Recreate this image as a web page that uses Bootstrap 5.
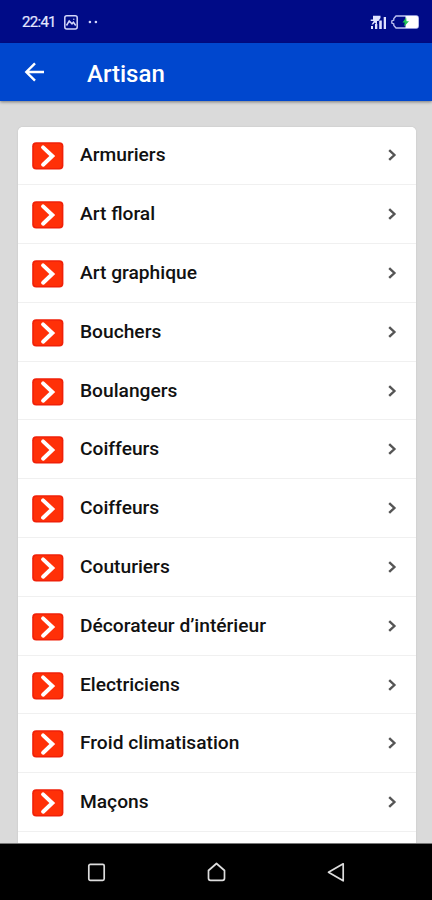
<!DOCTYPE html>
<html lang="fr">
<head>
<meta charset="utf-8">
<meta name="viewport" content="width=device-width, initial-scale=1">
<title>Artisan</title>
<link href="https://cdn.jsdelivr.net/npm/bootstrap@5.3.0/dist/css/bootstrap.min.css" rel="stylesheet">
<style>
  body { font-family: Roboto, "Liberation Sans", sans-serif; background: #dadada; }
  .screen { height: 900px; }
  .status-bar { height: 43px; background: #000b87; color: #e4e6ff; padding: 1px 13px 0 22px; font-size: 15px; }
  .clock { width: 34px; letter-spacing: -.7px; white-space: nowrap; -webkit-text-stroke: .2px; }
  .app-bar { height: 58px; background: #0047ce; padding: 0 22px; z-index: 1; box-shadow: 0 1px 3px rgba(0,0,0,.45); }
  .app-title { font-size: 24px; font-weight: 500; line-height: 28px; margin: 3px 0 0 40px; }
  .content { padding: 25.5px 16px 0 18px; min-height: 0; }
  .trade-list { background: #fff; height: 800px; border-radius: 5px; box-shadow: 0 0 2px rgba(0,0,0,.12); }
  .trade { height: 58.8px; padding: 0 18px 0 14px; border: 0; box-shadow: inset 0 -1px #f0f0f0; color: #111; font-size: 19.2px; font-weight: 500; }
  .trade-name { margin: 0 0 1px 16px; line-height: 24px; }
  .tile { margin-top: 1px; }
  .chevron { margin-bottom: 1px; }
  .system-nav { height: 57px; background: #000; border-top: 1px solid #777; padding: 0 86px; }
</style>
</head>
<body>
<svg class="d-none" xmlns="http://www.w3.org/2000/svg">
  <symbol id="tile" viewBox="0 0 32 28">
    <rect x=".2" y=".3" width="31.2" height="27.2" rx="4" fill="#f02008"/>
    <rect x="1.8" y="1.8" width="28" height="24.2" rx="3" fill="#ff3008"/>
    <path d="M11.1 5.400 20.300 14l-9.200 8.700" fill="none" stroke="#fff" stroke-width="4" stroke-linecap="round" stroke-linejoin="miter"/>
  </symbol>
  <symbol id="chevron" viewBox="0 0 12 14">
    <path d="M3.200 2.100 8.400 7l-5.200 4.900" fill="none" stroke="#555" stroke-width="2.400"/>
  </symbol>
</svg>
<div class="screen d-flex flex-column overflow-hidden">
  <header class="status-bar d-flex align-items-center flex-shrink-0">
    <span class="clock">22:41</span>
    <svg class="ms-2" width="14" height="15" viewBox="0 0 14 15" fill="none" stroke="#d4d7fa" stroke-width="1.500"><rect x=".8" y=".8" width="12.400" height="13.200" rx="2"/><path d="M2.500 10.500 5.200 6 8 8.800l1.400-1.500 2.300 3.200"/><circle cx="9.800" cy="4.300" r=".7" fill="#d4d7fa" stroke="none"/></svg>
    <svg class="ms-2" width="14" height="4" viewBox="0 0 14 4" fill="#d4d7fa"><circle cx="3.900" cy="2" r="1.300"/><circle cx="9.900" cy="2" r="1.300"/></svg>
    <svg class="ms-auto" width="17" height="15" viewBox="0 0 17 15" fill="#dfe2ff"><path d="M1 11h2v3H1zM5 9h2.300v5H5zM9.200 5.500h2.600v8.500H9.200zM13.700 2H16v12h-2.300z"/><path d="M3 .8h7.500v2.200L8.500 6H7v4L4.800 7.500 3 9.500H1.500L3.800 6H.7V4.500H3z"/></svg>
    <svg class="ms-1" width="28" height="14" viewBox="0 0 28 14"><path d="M5 1h20.200a2 2 0 0 1 2 2v8a2 2 0 0 1-2 2H5L2.800 10.500V9L.8 8V6l2-1V3.500z" fill="none" stroke="#bfc4f2" stroke-width="1.300"/><path d="M14.500 1h10.700a2 2 0 0 1 2 2v8a2 2 0 0 1-2 2H14.500z" fill="#fff"/><path d="M15.200 2.500 11.500 7.500h2.200l-.5 4 4.800-5.200h-2.500z" fill="#22c653"/></svg>
  </header>
  <nav class="app-bar d-flex align-items-center flex-shrink-0 text-white position-relative">
    <svg width="25" height="22" viewBox="0 0 25 22" fill="none" stroke="#fff" stroke-width="2.400"><path d="M22 11H4.500M13 2.300 4.300 11l8.700 8.700"/></svg>
    <h1 class="app-title">Artisan</h1>
  </nav>
  <main class="content flex-grow-1 overflow-hidden">
    <div class="trade-list list-group list-group-flush overflow-hidden" id="trades"></div>
  </main>
  <footer class="system-nav d-flex align-items-center justify-content-between flex-shrink-0">
    <svg width="20" height="20" viewBox="0 0 20 20" fill="none" stroke="#ddd" stroke-width="1.700"><rect x="2.800" y="2.300" width="15.400" height="16" rx="1.500"/></svg>
    <svg width="20" height="20" viewBox="0 0 20 20" fill="none" stroke="#ddd" stroke-width="1.700" stroke-linejoin="round"><path d="M10.500 1.500 18.500 8.500v7.800a2 2 0 0 1-2 2H4.500a2 2 0 0 1-2-2V8.500z"/></svg>
    <svg width="20" height="20" viewBox="0 0 20 20" fill="none" stroke="#ddd" stroke-width="1.700" stroke-linejoin="round"><path d="M17.200 1.800v17L2.500 10.300z"/></svg>
  </footer>
</div>
<script src="https://cdn.jsdelivr.net/npm/bootstrap@5.3.0/dist/js/bootstrap.bundle.min.js"></script>
<script>
  const trades = ["Armuriers", "Art floral", "Art graphique", "Bouchers", "Boulangers", "Coiffeurs", "Coiffeurs", "Couturiers", "Décorateur d’intérieur", "Electriciens", "Froid climatisation", "Maçons"];
  document.getElementById("trades").innerHTML = trades.map(name => `
    <a href="#" class="trade list-group-item list-group-item-action rounded-0 d-flex align-items-center flex-shrink-0">
      <svg class="tile" width="32" height="28"><use href="#tile"/></svg>
      <span class="trade-name">${name}</span>
      <svg class="chevron ms-auto" width="12" height="14"><use href="#chevron"/></svg>
    </a>`).join("");
</script>
</body>
</html>
